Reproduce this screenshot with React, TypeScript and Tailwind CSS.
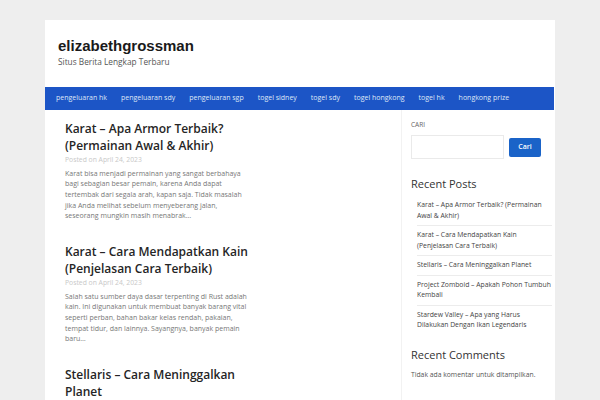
const navItems = [
  'pengeluaran hk',
  'pengeluaran sdy',
  'pengeluaran sgp',
  'togel sidney',
  'togel sdy',
  'togel hongkong',
  'togel hk',
  'hongkong prize',
];

const posts = [
  {
    title: 'Karat – Apa Armor Terbaik? (Permainan Awal & Akhir)',
    date: 'April 24, 2023',
    excerpt:
      'Karat bisa menjadi permainan yang sangat berbahaya bagi sebagian besar pemain, karena Anda dapat tertembak dari segala arah, kapan saja. Tidak masalah jika Anda melihat sebelum menyeberang jalan, seseorang mungkin masih menabrak…',
  },
  {
    title: 'Karat – Cara Mendapatkan Kain (Penjelasan Cara Terbaik)',
    date: 'April 24, 2023',
    excerpt:
      'Salah satu sumber daya dasar terpenting di Rust adalah kain. Ini digunakan untuk membuat banyak barang vital seperti perban, bahan bakar kelas rendah, pakaian, tempat tidur, dan lainnya. Sayangnya, banyak pemain baru…',
  },
  {
    title: 'Stellaris – Cara Meninggalkan Planet',
    date: 'April 24, 2023',
    excerpt: '',
  },
];

const recent = [
  'Karat – Apa Armor Terbaik? (Permainan Awal & Akhir)',
  'Karat – Cara Mendapatkan Kain (Penjelasan Cara Terbaik)',
  'Stellaris – Cara Meninggalkan Planet',
  'Project Zomboid – Apakah Pohon Tumbuh Kembali',
  'Stardew Valley – Apa yang Harus Dilakukan Dengan Ikan Legendaris',
];

export default function App() {
  return (
    <div className="h-[400px] overflow-hidden bg-[#eeeeee] pt-5 font-['Open_Sans',sans-serif]">
      <div className="mx-auto w-[510px] bg-white">
        {/* header */}
        <header className="h-[67px] px-[13px] pt-[17px]">
          <h1 className="font-['Liberation_Sans',Arial,sans-serif] text-[15px] font-bold leading-[18px] text-[#1a1a1a]">
            elizabethgrossman
          </h1>
          <p className="mt-[2px] text-[8.3px] leading-[10px] text-[#555]">Situs Berita Lengkap Terbaru</p>
        </header>

        {/* nav */}
        <nav className="mr-px flex h-[23px] items-center gap-[14px] bg-[#1c55c6] pl-[11px] text-[7px] text-[#dfe7f7]">
          {navItems.map((item) => (
            <span key={item}>{item}</span>
          ))}
        </nav>

        <div className="flex">
          {/* posts */}
          <main className="w-[356px] pl-5 pt-[10px]">
            {posts.map((post) => (
              <article key={post.title} className="mb-[21px] w-[185px]">
                <h2 className="text-[12px] font-semibold leading-[17px] text-[#252525]">{post.title}</h2>
                {post.excerpt && (
                  <>
                    <p className="mt-px text-[6.8px] leading-[10px] text-[#c8c8c8]">Posted on {post.date}</p>
                    <p className="mt-[3.5px] text-[7px] leading-[10.7px] text-[#777]">{post.excerpt}</p>
                  </>
                )}
              </article>
            ))}
          </main>

          {/* sidebar */}
          <aside className="w-[154px] border-l border-[#f2f2f2] pb-10 pl-[9px] pr-[3px] pt-[11px]">
            <div className="text-[6.5px] leading-[8px] text-[#666]">CARI</div>
            <div className="mt-[6px] flex items-center gap-[5px]">
              <div className="h-[24px] w-[93px] border border-[#eaeaea]" />
              <button className="h-[19px] w-[32px] rounded-[2px] bg-[#1a63c8] text-[7px] font-semibold text-white">
                Cari
              </button>
            </div>

            <h3 className="mt-[18px] text-[11px] leading-[14px] text-[#333]">Recent Posts</h3>
            <ul className="ml-[6px] mt-[5px]">
              {recent.map((r, i) => (
                <li
                  key={r}
                  className={`py-[4px] text-[6.8px] leading-[10.5px] text-[#444] ${
                    i < recent.length - 1 ? 'border-b border-[#ececec]' : ''
                  }`}
                >
                  {r}
                </li>
              ))}
            </ul>

            <h3 className="mt-[13px] text-[11px] leading-[14px] text-[#333]">Recent Comments</h3>
            <p className="mt-[8px] text-[6.8px] leading-[10px] text-[#555]">Tidak ada komentar untuk ditampilkan.</p>
          </aside>
        </div>
      </div>
    </div>
  );
}
